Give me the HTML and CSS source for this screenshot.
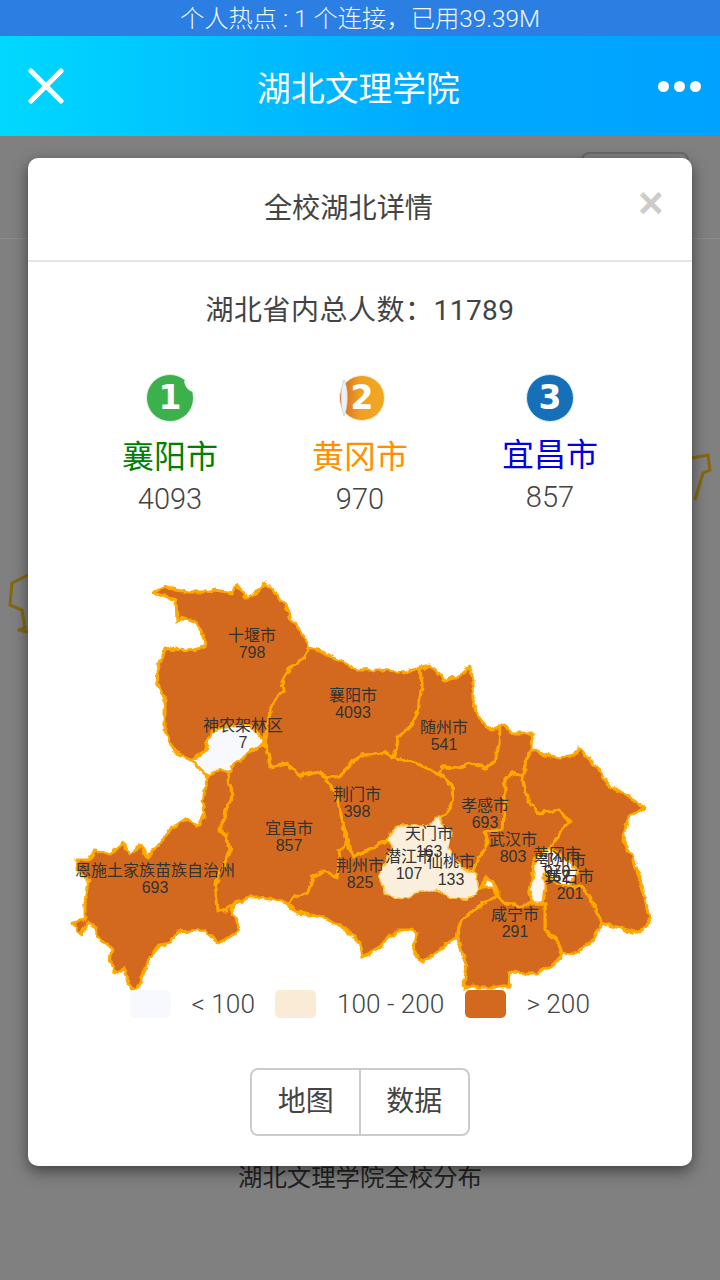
FILE: index.html
```html
<!DOCTYPE html>
<html>
	<head>
		<meta charset="utf-8">
		<title>湖北文理学院</title>
		<link rel="stylesheet" href="styles.css">
	</head>
	<body>
		<div class="hotspot">个人热点 : 1 个连接，已用39.39M</div>
		<div class="topbar">
			<svg class="topbar-close" width="36" height="36" viewBox="0 0 36 36">
				<path d="M3 3L33 33M33 3L3 33"/>
			</svg>
			<h1 class="topbar-title">湖北文理学院</h1>
			<div class="topbar-more"><i></i><i></i><i></i></div>
		</div>
		<div class="page">
			<!-- 弹层后面的页面 -->
			<div class="behind-btn"></div>
			<div class="behind-line"></div>
			<svg class="behind-map" width="720" height="700" viewBox="0 136 720 700">
				<path d="M28 575L12 583 10 605 22 610 25 628 18 630 28 632"/>
				<path d="M692 458L708 455 710 470 703 473 695 500"/>
			</svg>

			<div class="modal">
				<div class="modal-head">
					<h4 class="modal-title">全校湖北详情</h4>
					<span class="modal-close">×</span>
				</div>
				<p class="total">湖北省内总人数：11789</p>

				<div class="ranks">
					<div class="rank">
						<svg class="badge" width="50" height="50" viewBox="0 0 50 50">
							<circle cx="25" cy="25" r="23.5" fill="#3cb04b" stroke="#dff1e2"/>
							<path d="M39 8C40 13 42 17 48 19L50 4Z" fill="#fff"/>
							<text x="25" y="36" class="badge-num">1</text>
						</svg>
						<div class="rank-name rank-green">襄阳市</div>
						<div class="rank-num">4093</div>
					</div>
					<div class="rank">
						<svg class="badge" width="50" height="50" viewBox="0 0 50 50">
							<defs>
								<linearGradient id="peel" x1="0" x2="1" y1="0" y2="0">
									<stop offset="0" stop-color="#d8641c"/>
									<stop offset=".45" stop-color="#eea022"/>
									<stop offset="1" stop-color="#f0a824"/>
								</linearGradient>
							</defs>
							<circle cx="27" cy="25" r="22.5" fill="url(#peel)" stroke="#fbeed8"/>
							<text x="27" y="36" class="badge-num">2</text>
							<path d="M9 7C5 15 5 33 9 43C13 36 14 15 9 7Z" fill="#eef0f4" stroke="#b9c0cc" stroke-width=".6"/>
						</svg>
						<div class="rank-name rank-orange">黄冈市</div>
						<div class="rank-num">970</div>
					</div>
					<div class="rank rank-third">
						<svg class="badge" width="50" height="50" viewBox="0 0 50 50">
							<circle cx="25" cy="25" r="23.5" fill="#1570b8" stroke="#d6eaf6"/>
							<text x="25" y="36" class="badge-num">3</text>
						</svg>
						<div class="rank-name rank-blue">宜昌市</div>
						<div class="rank-num">857</div>
					</div>
				</div>

				<svg class="map" width="664" height="420" viewBox="28 570 664 420">
					<defs>
						<filter id="rough" x="-5%" y="-5%" width="110%" height="110%" color-interpolation-filters="sRGB">
							<feTurbulence type="fractalNoise" baseFrequency="0.13" numOctaves="2" seed="4"/>
							<feDisplacementMap in="SourceGraphic" scale="6" xChannelSelector="R" yChannelSelector="G"/>
							<feGaussianBlur stdDeviation="0.5"/>
						</filter>
					</defs>
					<g class="regions" filter="url(#rough)">
						<!-- 十堰 -->
						<path class="high" d="M153 593L165 586 175 590 190 592 205 592 215 590 233 593 236 584 243 592 246 598 255 593 266 584 278 595 283 603 288 610 291 620 300 630 309 647 303 658 290 668 283 680 284 692 275 700 270 712 268 725 264 742 250 727 225 728 210 735 205 752 193 760 175 752 170 740 165 730 165 700 158 685 157 670 165 650 175 648 190 651 205 647 204 635 195 622 180 618 177 622 176 600 165 597Z"/>
						<!-- 襄阳 -->
						<path class="high" d="M309 647L327 654 357 670 380 670 403 673 420 668 422 685 418 712 410 727 397 737 396 747 393 758 385 752 370 755 360 755 345 770 340 777 327 777 313 772 300 777 287 763 270 767 267 747 264 742 268 725 270 712 275 700 284 692 283 680 290 668 303 658Z"/>
						<!-- 随州 -->
						<path class="high" d="M420 668L430 666 445 680 460 675 470 667 473 680 473 700 480 720 492 730 500 726 499 745 494 762 485 768 470 763 460 768 442 767 440 775 420 765 405 760 393 758 396 747 397 737 410 727 418 712 422 685Z"/>
						<!-- 孝感 -->
						<path class="high" d="M500 726L505 725 512 733 533 733 532 748 528 755 522 777 512 773 505 780 505 800 503 830 485 832 488 843 473 870 463 870 448 850 450 833 438 818 445 815 453 800 452 785 440 775 442 767 460 768 470 763 485 768 494 762 499 745Z"/>
						<!-- 荆门 -->
						<path class="high" d="M360 755L370 755 385 752 393 758 405 760 420 765 440 775 452 785 453 800 445 815 438 818 430 827 397 827 387 840 370 850 353 857 343 823 337 797 327 780 327 777 340 777 345 770Z"/>
						<!-- 宜昌 -->
						<path class="high" d="M230 772L235 762 245 755 258 746 267 747 270 767 287 763 300 777 313 772 327 777 327 780 337 797 343 823 347 842 340 850 338 867 337 878 325 870 313 877 308 893 293 898 288 903 260 897 250 897 233 903 227 910 218 910 215 883 223 867 230 852 227 835 220 830 227 807 233 795 227 780Z"/>
						<!-- 恩施 -->
						<path class="high" d="M208 774L220 768 230 772 227 780 233 795 227 807 220 830 227 835 230 852 223 867 215 883 218 910 227 910 233 903 232 912 240 930 220 943 203 930 177 932 170 943 160 945 150 957 138 987 130 988 125 968 115 973 110 962 112 947 100 940 95 927 88 922 80 935 73 923 85 920 85 903 88 880 77 870 77 860 90 860 95 850 110 855 123 843 130 855 140 845 147 857 157 847 170 830 187 818 198 827 205 813 203 800 207 780Z"/>
						<!-- 荆州 -->
						<path class="high" d="M288 903L293 898 308 893 313 877 325 870 337 878 338 867 340 850 347 842 353 857 370 850 387 840 393 847 380 877 385 893 403 898 418 890 420 890 437 890 453 897 467 898 478 890 483 887 492 887 497 895 470 913 460 923 457 937 443 947 423 962 412 950 418 933 410 930 397 930 380 947 363 957 360 943 347 930 323 917 297 913Z"/>
						<!-- 武汉 -->
						<path class="high" d="M522 777L512 773 505 780 505 800 503 830 485 832 488 843 473 870 475 873 478 890 483 887 485 878 493 882 503 903 520 907 533 903 530 893 535 860 537 857 550 847 560 832 570 822 560 810 537 813 527 797Z"/>
						<!-- 黄冈 -->
						<path class="high" d="M532 748L545 755 560 758 575 755 578 748 585 755 600 770 610 787 627 795 645 808 630 815 627 823 623 840 633 857 643 890 650 923 637 933 617 927 602 923 587 893 580 887 570 887 577 870 567 860 550 847 560 832 570 822 560 810 537 813 527 797 522 777 528 755Z"/>
						<!-- 黄石 -->
						<path class="high" d="M545 887L545 873 557 883 570 887 580 887 587 893 602 923 593 940 573 955 562 953 557 940 545 930 545 905 543 903Z"/>
						<!-- 咸宁 -->
						<path class="high" d="M460 923L470 913 497 895 503 903 520 907 533 903 543 903 545 905 545 930 557 940 562 953 557 962 537 973 527 973 510 972 509 987 463 987 467 967 457 937Z"/>
						<!-- 神农架 -->
						<path class="low" d="M210 733L225 726 250 725 265 742 258 747 245 756 235 763 230 773 220 770 208 776 191 760 205 751Z"/>
						<!-- 天门 潜江 仙桃 -->
						<path class="mid no-edge" d="M387 840L397 825 430 825 438 816 451 833 449 850 463 870 476 873 479 891 467 899 453 898 437 891 420 891 403 899 385 894 379 877 393 847Z"/>
						<!-- 鄂州 -->
						<path class="white" d="M550 847L567 860 577 870 570 887 557 883 545 873 545 887 543 903 533 903 530 893 535 860 537 857Z"/>
					</g>
					<g class="labels">
						<text x="252" y="641">十堰市</text><text x="252" y="658">798</text>
						<text x="353" y="701">襄阳市</text><text x="353" y="718">4093</text>
						<text x="243" y="731">神农架林区</text><text x="243" y="748">7</text>
						<text x="444" y="733">随州市</text><text x="444" y="750">541</text>
						<text x="357" y="800">荆门市</text><text x="357" y="817">398</text>
						<text x="485" y="811">孝感市</text><text x="485" y="828">693</text>
						<text x="289" y="834">宜昌市</text><text x="289" y="851">857</text>
						<text x="429" y="839">天门市</text><text x="429" y="857">163</text>
						<text x="513" y="845">武汉市</text><text x="513" y="862">803</text>
						<text x="557" y="860">黄冈市</text><text x="557" y="877">970</text>
						<text x="562" y="866">鄂州市</text><text x="557" y="882">152</text>
						<text x="409" y="862">潜江市</text><text x="409" y="879">107</text>
						<text x="451" y="867">仙桃市</text><text x="451" y="885">133</text>
						<text x="360" y="871">荆州市</text><text x="360" y="888">825</text>
						<text x="570" y="882">黄石市</text><text x="570" y="899">201</text>
						<text x="155" y="876">恩施土家族苗族自治州</text><text x="155" y="893">693</text>
						<text x="515" y="920">咸宁市</text><text x="515" y="937">291</text>
					</g>
				</svg>

				<div class="legend">
					<i class="swatch swatch-low"></i><span>&lt; 100</span>
					<i class="swatch swatch-mid"></i><span>100 - 200</span>
					<i class="swatch swatch-high"></i><span>&gt; 200</span>
				</div>

				<div class="tabs">
					<span class="tab">地图</span><span class="tab">数据</span>
				</div>
			</div>
			<p class="caption">湖北文理学院全校分布</p>
		</div>
	</body>
</html>
```

FILE: styles.css
```css
*{
	margin:            0;
	padding:           0;
	box-sizing:        border-box;
}
html,body{
	width:             720px;
	height:            1280px;
	overflow:          hidden;
}
body{
	background:        #808080;
	font-family:       Roboto, "Noto Sans CJK SC", sans-serif;
	font-weight:       300;
	color:             #444;
}
.hotspot{
	height:            36px;
	line-height:       38px;
	background:        #2b7fe3;
	color:             #f2f7fd;
	font-size:         24.3px;
	text-align:        center;
}
.topbar{
	height:            100px;
	padding:           0 19px 0 28px;
	display:           flex;
	align-items:       center;
	justify-content:   space-between;
	background:        linear-gradient(90deg, #00d8ff 0%, #00aaff 60%, #00a2ff 100%);
	color:             #fff;
}
.topbar-close{
	fill:              none;
	stroke:            #fff;
	stroke-width:      5;
	stroke-linecap:    round;
}
.topbar-title{
	margin-right:      5px;
	font-size:         33.8px;
	font-weight:       400;
}
.topbar-more{
	display:           flex;
	gap:               5px;
}
.topbar-more i{
	width:             11px;
	height:            11px;
	border-radius:     50%;
	background:        #fff;
}
.page{
	position:          relative;
	height:            1144px;
	padding-top:       22px;
}
.behind-btn{
	position:          absolute;
	left:              581px;
	top:               16px;
	width:             108px;
	height:            40px;
	border:            2px solid #696969;
	border-radius:     8px;
}
.behind-line{
	position:          absolute;
	left:              0;
	top:               102px;
	width:             100%;
	height:            1px;
	background:        #8c8c8c;
}
.behind-map{
	position:          absolute;
	left:              0;
	top:               0;
	fill:              none;
	stroke:            #85680f;
	stroke-width:      3;
}
.modal{
	position:          relative;
	width:             664px;
	height:            1008px;
	margin:            0 auto;
	background:        #fff;
	border-radius:     10px;
	box-shadow:        0 5px 15px rgba(0,0,0,.5);
}
.modal-head{
	height:            104px;
	padding:           0 31px;
	display:           flex;
	align-items:       center;
	border-bottom:     2px solid #e5e5e5;
}
.modal-title{
	flex:              1;
	font-size:         28.2px;
	font-weight:       400;
	line-height:       100px;
	text-align:        center;
}
.modal-close{
	width:             23px;
	margin-top:        -12px;
	font:              bold 44px/40px "Liberation Sans", sans-serif;
	color:             #ccc;
	text-align:        center;
}
.total{
	margin-top:        29px;
	margin-bottom:     -1px;
	line-height:       40px;
	font-size:         28px;
	font-weight:       400;
	letter-spacing:    .5px;
	text-align:        center;
}
.ranks{
	margin-top:        43px;
	display:           grid;
	grid-template-columns: repeat(3, 190px);
	justify-content:   center;
	text-align:        center;
}
.badge{
	display:           block;
	margin:            0 auto;
}
.badge-num{
	font:              bold 33px "DejaVu Sans", sans-serif;
	fill:              #fff;
	text-anchor:       middle;
}
.rank-name{
	margin-top:        14px;
	line-height:       40px;
	font-size:         32px;
	font-weight:       400;
}
.rank-green{
	color:             #008000;
}
.rank-orange{
	color:             #ff9000;
}
.rank-blue{
	color:             #0000e6;
}
.rank-third .rank-name{
	margin-top:        12px;
}
.rank-num{
	margin-top:        4px;
	line-height:       36px;
	font-size:         29px;
}
.map{
	display:           block;
	margin-top:        53px;
	overflow:          visible;
}
.regions path{
	stroke:            #ffa800;
	stroke-width:      3;
	stroke-linejoin:   round;
}
.regions .no-edge{
	stroke:            #ffc040;
	stroke-width:      1.5;
}
.high{
	fill:              #d2691e;
}
.mid{
	fill:              #faefdc;
}
.low{
	fill:              #f8f8ff;
}
.white{
	fill:              #fdf8ef;
}
.labels text{
	font:              400 16px "Liberation Sans", "Noto Sans CJK SC", sans-serif;
	fill:              #333;
	text-anchor:       middle;
}
.legend{
	display:           flex;
	justify-content:   center;
	align-items:       center;
	gap:               20.5px;
	height:            28px;
	font-size:         26.2px;
}
.swatch{
	width:             41px;
	height:            28px;
	border-radius:     5px;
}
.swatch-low{
	background:        #f8f8ff;
}
.swatch-mid{
	background:        #faebd7;
}
.swatch-high{
	background:        #d2691e;
}
.tabs{
	width:             220px;
	height:            68px;
	margin:            50px auto 0;
	display:           flex;
	border:            2px solid #ccc;
	border-radius:     8px;
}
.tab{
	flex:              1;
	line-height:       64px;
	font-size:         28px;
	font-weight:       400;
	text-align:        center;
}
.tab + .tab{
	border-left:       2px solid #ccc;
	margin-left:       -1px;
}
.caption{
	line-height:       24px;
	font-size:         24.4px;
	font-weight:       400;
	color:             #222;
	text-align:        center;
}
```
